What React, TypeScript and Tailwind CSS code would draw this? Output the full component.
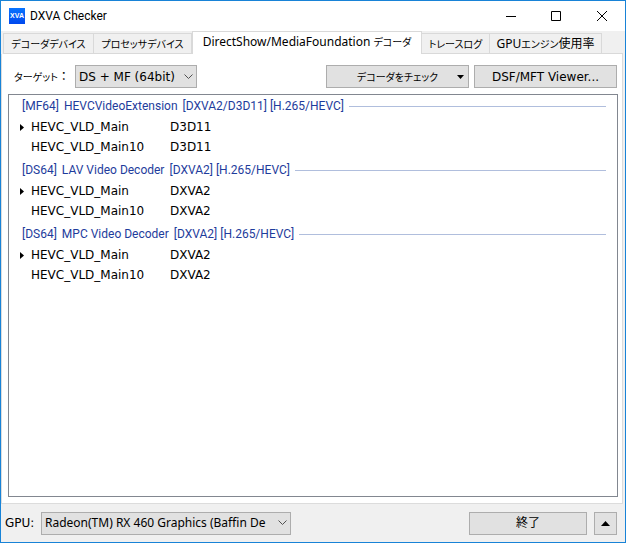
import type { ReactNode } from "react";

const tabs = [
  { before: "", kana: "デコーダデバイス", after: "", width: "w-[91px]" },
  { before: "", kana: "プロセッサデバイス", after: "", width: "w-[98px]" },
  { before: "DirectShow/MediaFoundation ", kana: "デコーダ", after: "", width: "w-[230px]", selected: true },
  { before: "", kana: "トレースログ", after: "", width: "w-[68px]" },
  { before: "GPU", kana: "エンジン", after: "使用率", width: "w-[112px]" },
];

const groups = [
  { tag: "[MF64]", name: "HEVCVideoExtension", info: "[DXVA2/D3D11] [H.265/HEVC]", api: "D3D11" },
  { tag: "[DS64]", name: "LAV Video Decoder", info: "[DXVA2] [H.265/HEVC]", api: "DXVA2" },
  { tag: "[DS64]", name: "MPC Video Decoder", info: "[DXVA2] [H.265/HEVC]", api: "DXVA2" },
];

function Kana({ children }: { children: ReactNode }) {
  return <span className="font-['Noto_Sans_CJK_JP',sans-serif] text-[10px] [font-feature-settings:'palt']">{children}</span>;
}

function Glyph({ d, w, h, fill = false }: { d: string; w: number; h: number; fill?: boolean }) {
  return (
    <svg width={w} height={h} viewBox={`0 0 ${w} ${h}`} fill={fill ? "#000" : "none"} stroke={fill ? "none" : "currentColor"} aria-hidden="true" className="block shrink-0">
      <path d={d} />
    </svg>
  );
}

function Dropdown({ id, value, className }: { id: string; value: string; className: string }) {
  return (
    <div className={`relative h-[23px] ${className}`}>
      <select id={id} className="block h-full w-full appearance-none overflow-hidden border border-[#adadad] bg-[#e1e1e1] pr-5 pl-[3px] whitespace-nowrap outline-none">
        <option>{value}</option>
      </select>
      <span className="pointer-events-none absolute inset-y-0 right-1 flex items-center text-[#505050]">
        <Glyph w={9} h={6} d="M.5 .5 4.5 4.5 8.5 .5" />
      </span>
    </div>
  );
}

function PushButton({ children, className, label }: { children: ReactNode; className: string; label?: string }) {
  return (
    <button type="button" aria-label={label} className={`flex h-[23px] items-center justify-center border border-[#adadad] bg-[#e1e1e1] whitespace-nowrap ${className}`}>
      {children}
    </button>
  );
}

function TitleBar() {
  return (
    <header className="flex h-[30px] shrink-0 items-center bg-white pl-2">
      <svg width="16" height="16" viewBox="0 0 16 16" aria-hidden="true">
        <defs>
          <linearGradient id="logo" x1="0" y1="0" x2="0" y2="1">
            <stop offset="0" stopColor="#0874ff" />
            <stop offset="1" stopColor="#0048ee" />
          </linearGradient>
        </defs>
        <rect width="16" height="16" fill="url(#logo)" />
        <text x="8" y="10" textAnchor="middle" fill="#fff" fontSize="7" fontWeight="700" fontFamily="Liberation Sans, sans-serif">XVA</text>
      </svg>
      <h1 className="ml-[5px] flex-1 font-[Roboto,sans-serif] text-[12px]">DXVA Checker</h1>
      <button type="button" aria-label="Minimize" className="flex h-full w-[45px] items-center justify-center">
        <Glyph w={10} h={10} d="M0 5.5H10" />
      </button>
      <button type="button" aria-label="Maximize" className="flex h-full w-[46px] items-center justify-center">
        <Glyph w={10} h={10} d="M.5 .5H9.5V9.5H.5Z" />
      </button>
      <button type="button" aria-label="Close" className="flex h-full w-[46px] items-center justify-center">
        <Glyph w={10} h={10} d="M0 0 10 10M10 0 0 10" />
      </button>
    </header>
  );
}

export default function App() {
  return (
    <div className="flex min-h-screen flex-col border border-[#1883d7] bg-[#f0f0f0] font-['DejaVu_Sans','Noto_Sans_CJK_JP',sans-serif] text-[12px] leading-4 text-black">
      <TitleBar />
      <div className="flex flex-1 flex-col pr-[2px]">
        <nav role="tablist" className="flex h-[23px] items-end pl-[2px]">
          {tabs.map((tab, i) => (
            <button
              key={tab.kana + tab.width}
              type="button"
              role="tab"
              aria-selected={!!tab.selected}
              className={`flex items-center justify-center border-[#d9d9d9] font-['Noto_Sans','Noto_Sans_CJK_JP',sans-serif] whitespace-pre ${tab.width} ${
                tab.selected ? "h-[23px] border-x border-t bg-white pb-[3px]" : "h-[21px] border-y border-r bg-[#f0f0f0]"
              } ${i === 0 ? "border-l" : ""}`}
            >
              {tab.before}
              <Kana>{tab.kana}</Kana>
              {tab.after}
            </button>
          ))}
          <span className="h-px flex-1 bg-[#d9d9d9]" />
        </nav>
        <main className="flex flex-1 flex-col border-x border-b border-[#dcdcdc] bg-white pr-1 pb-[6px] pl-[6px]">
          <div className="flex h-10 items-center pt-[5px]">
            <label htmlFor="target" className="w-[67px] pl-[6px]">
              <Kana>ターゲット</Kana>：
            </label>
            <Dropdown id="target" value="DS + MF (64bit)" className="w-[122px]" />
            <div className="mr-px ml-auto flex gap-[5px]">
              <PushButton className="relative w-[143px]">
                <Kana>デコーダをチェック</Kana>
                <span className="absolute right-1">
                  <Glyph w={7} h={4} fill d="M0 0H7L3.5 4Z" />
                </span>
              </PushButton>
              <PushButton className="w-[143px]">DSF/MFT Viewer...</PushButton>
            </div>
          </div>
          <section className="flex-1 border border-[#828790]">
            {groups.map((group) => (
              <div key={group.name} className="mb-[2px]">
                <h2 className="flex h-[22px] items-center gap-[5px] pr-[11px] pl-[13px] font-[Roboto,sans-serif] text-[12px] whitespace-nowrap text-[#1e3c9c]">
                  <span>{group.tag}</span>
                  <span>{group.name}</span>
                  <span>{group.info}</span>
                  <span className="h-px flex-1 bg-[#b0bedd]" />
                </h2>
                <table className="w-full table-fixed">
                  <tbody>
                    {["HEVC_VLD_Main", "HEVC_VLD_Main10"].map((mode, i) => (
                      <tr key={mode} className="h-5">
                        <td className="w-[22px] p-0 pl-[11px]">{i === 0 && <Glyph w={4} h={7} fill d="M0 0 4 3.5 0 7Z" />}</td>
                        <td className="w-[139px] p-0">{mode}</td>
                        <td className="p-0">{group.api}</td>
                      </tr>
                    ))}
                  </tbody>
                </table>
              </div>
            ))}
          </section>
        </main>
      </div>
      <footer className="flex h-[38px] shrink-0 items-center pr-2 pl-1">
        <label htmlFor="gpu" className="w-9">GPU:</label>
        <Dropdown id="gpu" value="Radeon(TM) RX 460 Graphics (Baffin De" className="w-[250px] font-['Noto_Sans',sans-serif]" />
        <PushButton className="ml-auto w-[118px]">終了</PushButton>
        <PushButton className="ml-[7px] w-[23px]" label="メニュー">
          <Glyph w={9} h={5} fill d="M0 5 4.5 0 9 5Z" />
        </PushButton>
      </footer>
    </div>
  );
}
